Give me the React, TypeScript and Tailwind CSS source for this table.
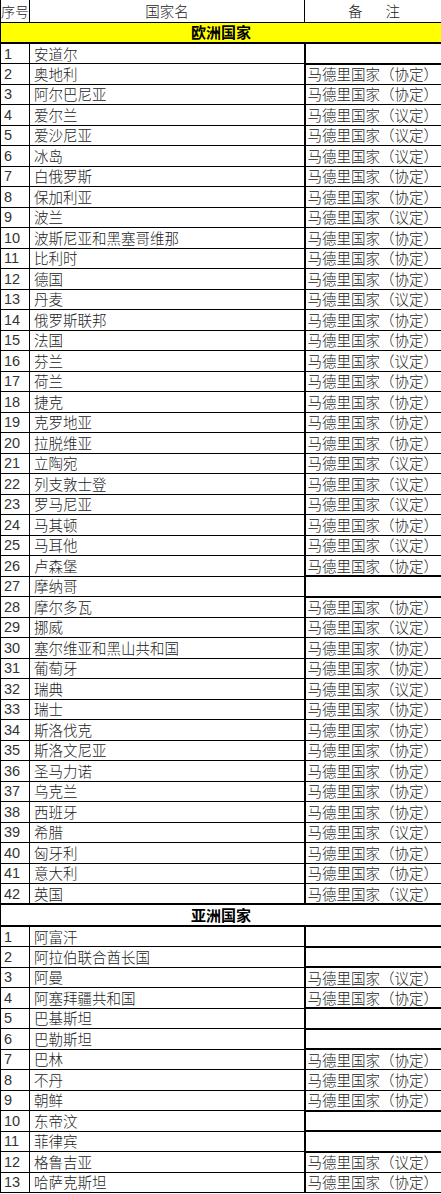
import React from "react";

type Row = [string, string | null];

const europe: Row[] = [
  ["安道尔", null],
  ["奥地利", "协定"],
  ["阿尔巴尼亚", "协定"],
  ["爱尔兰", "议定"],
  ["爱沙尼亚", "议定"],
  ["冰岛", "议定"],
  ["白俄罗斯", "协定"],
  ["保加利亚", "协定"],
  ["波兰", "议定"],
  ["波斯尼亚和黑塞哥维那", "协定"],
  ["比利时", "协定"],
  ["德国", "协定"],
  ["丹麦", "议定"],
  ["俄罗斯联邦", "协定"],
  ["法国", "协定"],
  ["芬兰", "议定"],
  ["荷兰", "协定"],
  ["捷克", "协定"],
  ["克罗地亚", "协定"],
  ["拉脱维亚", "协定"],
  ["立陶宛", "议定"],
  ["列支敦士登", "议定"],
  ["罗马尼亚", "议定"],
  ["马其顿", "协定"],
  ["马耳他", "议定"],
  ["卢森堡", "协定"],
  ["摩纳哥", null],
  ["摩尔多瓦", "协定"],
  ["挪威", "议定"],
  ["塞尔维亚和黑山共和国", "协定"],
  ["葡萄牙", "协定"],
  ["瑞典", "议定"],
  ["瑞士", "协定"],
  ["斯洛伐克", "协定"],
  ["斯洛文尼亚", "协定"],
  ["圣马力诺", "协定"],
  ["乌克兰", "协定"],
  ["西班牙", "协定"],
  ["希腊", "议定"],
  ["匈牙利", "协定"],
  ["意大利", "协定"],
  ["英国", "议定"],
];

const asia: Row[] = [
  ["阿富汗", null],
  ["阿拉伯联合酋长国", null],
  ["阿曼", "议定"],
  ["阿塞拜疆共和国", "协定"],
  ["巴基斯坦", null],
  ["巴勒斯坦", null],
  ["巴林", "协定"],
  ["不丹", "协定"],
  ["朝鲜", "协定"],
  ["东帝汶", null],
  ["菲律宾", null],
  ["格鲁吉亚", "议定"],
  ["哈萨克斯坦", "协定"],
];

const cjk = { fontFamily: '"Noto Sans CJK SC", "Noto Sans", sans-serif' };
const num = { fontFamily: '"Liberation Sans", "DejaVu Sans", sans-serif' };

function DataRows({ rows }: { rows: Row[] }) {
  return (
    <>
      {rows.map(([name, kind], i) => (
        <tr key={name} className="h-[20.5px]">
          <td
            className="border border-black p-0 pl-[3px] text-[14.5px] leading-[18px] text-[#333] whitespace-nowrap"
            style={num}
          >
            {i + 1}
          </td>
          <td
            className="border border-black p-0 pl-[4px] text-[14.5px] leading-[18px] text-[#222] font-light whitespace-nowrap"
            style={cjk}
          >
            {name}
          </td>
          {kind ? (
            <td
              className="border border-black border-l-2 p-0 pl-[2px] text-[14.5px] leading-[18px] text-[#222] font-light whitespace-nowrap overflow-hidden"
              style={cjk}
            >
              马德里国家（{kind}）
            </td>
          ) : (
            <td className="border-2 border-black p-0" />
          )}
        </tr>
      ))}
    </>
  );
}

export default function App() {
  return (
    <div className="w-[441px] bg-white">
      <table className="w-[441px] table-fixed border-collapse">
        <colgroup>
          <col className="w-[29px]" />
          <col className="w-[275px]" />
          <col className="w-[137px]" />
        </colgroup>
        <tbody>
          <tr className="h-[22px]">
            <td
              className="border-x border-b border-black p-0 text-[14px] leading-[18px] text-[#222] font-light whitespace-nowrap overflow-hidden"
              style={cjk}
            >
              序号
            </td>
            <td
              className="border-x border-b border-black p-0 text-center text-[14.5px] leading-[18px] text-[#222] font-light"
              style={cjk}
            >
              国家名
            </td>
            <td
              className="border-x border-b border-black p-0 text-[14.5px] leading-[18px] text-[#222] font-light"
              style={cjk}
            >
              <div className="flex justify-center gap-[23px] pl-[2px]">
                <span>备</span>
                <span>注</span>
              </div>
            </td>
          </tr>
          <tr className="h-[21px]">
            <td
              colSpan={3}
              className="border border-black border-b-2 bg-[#ffff00] p-0 text-center text-[15px] leading-[18px] font-bold text-black"
              style={cjk}
            >
              欧洲国家
            </td>
          </tr>
          <DataRows rows={europe} />
          <tr className="h-[22px]">
            <td
              colSpan={3}
              className="border border-black border-y-2 p-0 text-center text-[15px] leading-[18px] font-bold text-black"
              style={cjk}
            >
              亚洲国家
            </td>
          </tr>
          <DataRows rows={asia} />
        </tbody>
      </table>
    </div>
  );
}
